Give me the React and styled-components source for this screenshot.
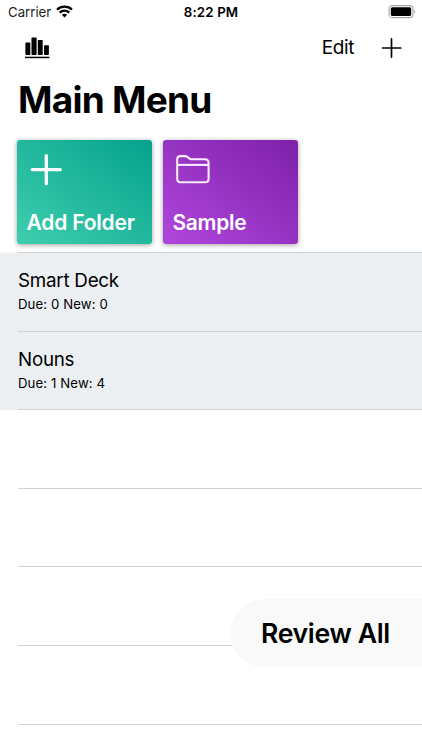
import React from 'react'
import styled, {createGlobalStyle} from 'styled-components';

const decks = [
  {name: 'Smart Deck', due: 0, fresh: 0},
  {name: 'Nouns', due: 1, fresh: 4},
];

const emptyRows = [1, 2, 3, 4];

const WifiIcon = () => (
  <svg width="17" height="13" viewBox="0 0 17 13" fill="none" stroke="#000" strokeWidth="2.2">
    <path d="M1 4.7C5.1 .7 11.9 .7 16 4.7"/>
    <path d="M3.7 7.6C6.4 5 10.6 5 13.3 7.6"/>
    <path d="M8.5 12.4L5.9 9.8C7.4 8.5 9.6 8.5 11.1 9.8Z" fill="#000" stroke="none"/>
  </svg>
)

const BatteryIcon = () => (
  <svg width="28" height="14" viewBox="0 0 28 14">
    <rect x="1" y=".6" width="24" height="12" rx="3.4" fill="none" stroke="#a4a4a4" strokeWidth="1.1"/>
    <rect x="2.8" y="2.3" width="20.4" height="8.6" rx="1.5" fill="#000"/>
    <path d="M26.3 4.6C27.6 5.1 27.6 8 26.3 8.5Z" fill="#a4a4a4"/>
  </svg>
)

const StatsIcon = () => (
  <svg width="25" height="22" viewBox="0 0 25 22" fill="#000">
    <rect x=".4" y="5.6" width="4.9" height="12.4" rx=".8"/>
    <rect x="6.5" y=".5" width="5.1" height="17.5" rx=".8"/>
    <rect x="12.8" y="3" width="4.9" height="15" rx=".8"/>
    <rect x="19" y="8.2" width="4.9" height="9.8" rx=".8"/>
    <rect x="0" y="19.7" width="24.4" height="1.5"/>
  </svg>
)

const AddIcon = () => (
  <svg width="20" height="20" viewBox="0 0 20 20" stroke="#000" strokeWidth="1.7" strokeLinecap="round">
    <path d="M9.5 .9V19.1M.5 10H18.8"/>
  </svg>
)

const CardPlusIcon = () => (
  <svg width="32" height="32" viewBox="0 0 32 32" stroke="#fff" strokeWidth="3.3" strokeLinecap="round">
    <path d="M16.3 1.7V29.7M2.3 15.6H30.3"/>
  </svg>
)

const FolderIcon = () => (
  <svg width="34" height="29" viewBox="0 0 34 29" fill="none" stroke="#fbecff" strokeWidth="2.1" strokeLinejoin="round">
    <path d="M1.2 5V4.3Q1.2 1.1 4.4 1.1H9Q10.5 1.1 11.6 2.1L13.2 3.4Q14.2 4.2 15.6 4.2H28.8Q32.6 4.2 32.6 8.1V23.7Q32.6 27.3 28.8 27.3H5.2Q1.2 27.3 1.2 23.7Z"/>
    <path d="M1.2 9.9H32.6"/>
  </svg>
)

const App = () => (
  <Screen>
    <GlobalStyle/>
    <StatusBar>
      <Carrier>
        <span>Carrier</span>
        <WifiIcon/>
      </Carrier>
      <Time>8:22 PM</Time>
      <Battery><BatteryIcon/></Battery>
    </StatusBar>
    <NavBar>
      <StatsIcon/>
      <Actions>
        <Edit>Edit</Edit>
        <AddIcon/>
      </Actions>
    </NavBar>
    <Title>Main Menu</Title>
    <Folders>
      <Folder $from="#3fceae" $to="#05a28d">
        <FolderGlyph><CardPlusIcon/></FolderGlyph>
        <FolderName $spacing="-0.2px">Add Folder</FolderName>
      </Folder>
      <Folder $from="#b047dc" $to="#7e20a9">
        <FolderGlyph><FolderIcon/></FolderGlyph>
        <FolderName $spacing="-0.3px">Sample</FolderName>
      </Folder>
    </Folders>
    <List>
      {decks.map(({name, due, fresh}) => (
        <Row key={name} $filled>
          <RowContent>
            <DeckName>{name}</DeckName>
            <DeckInfo>Due: {due} New: {fresh}</DeckInfo>
          </RowContent>
        </Row>
      ))}
      {emptyRows.map((id) => <Row key={id}><RowContent/></Row>)}
    </List>
    <ReviewButton>Review All</ReviewButton>
  </Screen>
)

const GlobalStyle = createGlobalStyle`
  * {
    box-sizing: border-box;
  }

  body {
    margin: 0;
    background: #fff;
  }

  svg {
    display: block;
    flex-shrink: 0;
  }
`

const Screen = styled.div`
  position: relative;
  display: flex;
  flex-direction: column;
  width: 422px;
  height: 750px;
  overflow: hidden;
  color: #000;
  font-family: Inter, "Liberation Sans", sans-serif;
`

const StatusBar = styled.div`
  display: grid;
  grid-template-columns: 1fr auto 1fr;
  align-items: center;
  height: 23px;
  padding: 0 6px 0 8px;
  font-size: 13.2px;
`

const Carrier = styled.div`
  display: flex;
  align-items: center;
  gap: 5px;
  color: #222;
`

const Time = styled.div`
  padding-right: 2px;
  font-size: 13.3px;
  font-weight: 600;
  letter-spacing: 0.15px;
`

const Battery = styled.div`
  display: flex;
  justify-content: flex-end;
`

const NavBar = styled.div`
  display: flex;
  align-items: center;
  justify-content: space-between;
  height: 49px;
  padding: 0 20px 0 25px;
`

const Actions = styled.div`
  display: flex;
  align-items: center;
  gap: 28px;
`

const Edit = styled.span`
  font-size: 19px;
  line-height: 24px;
  letter-spacing: -0.4px;
`

const Title = styled.h1`
  height: 68px;
  margin: 0;
  padding-left: 18px;
  font-size: 37px;
  font-weight: 700;
  line-height: 55px;
  letter-spacing: -0.75px;
`

const Folders = styled.div`
  display: flex;
  gap: 11px;
  height: 112px;
  padding-left: 17px;
`

const Folder = styled.div`
  display: flex;
  flex-direction: column;
  justify-content: space-between;
  width: 135px;
  height: 103.5px;
  padding: 13px 9px 8px;
  border-radius: 3px;
  background: linear-gradient(to top right, ${({$from}) => $from}, ${({$to}) => $to});
  box-shadow: 0 1px 5px rgba(0, 0, 0, 0.38);
`

const FolderGlyph = styled.div`
  display: flex;
  align-items: center;
  height: 33px;
  padding-left: 4px;
`

const FolderName = styled.div`
  padding-left: 0.5px;
  color: #fff;
  font-size: 21px;
  font-weight: 600;
  line-height: 27px;
  letter-spacing: ${({$spacing}) => $spacing};
  white-space: nowrap;
`

const List = styled.div`
  &::before {
    content: '';
    display: block;
    height: 1px;
    background: linear-gradient(to right, #f4f5f7 18px, #cfd2d5 18px);
  }
`

const Row = styled.div`
  height: 78.6px;
  padding-left: 18px;
  background: ${({$filled}) => $filled ? '#ebeff2' : '#fff'};
`

const RowContent = styled.div`
  height: 100%;
  padding-top: 16px;
  border-bottom: 1px solid #d2d3d5;
`

const DeckName = styled.div`
  font-size: 18.8px;
  line-height: 24px;
  letter-spacing: -0.25px;
`

const DeckInfo = styled.div`
  font-size: 13.2px;
  line-height: 22px;
  letter-spacing: 0.1px;
`

const ReviewButton = styled.div`
  position: absolute;
  right: 0;
  top: 599px;
  display: flex;
  align-items: center;
  width: 192px;
  height: 68px;
  padding-left: 31px;
  border-radius: 34px 0 0 34px;
  background: #f9f9f9;
  font-size: 26.6px;
  font-weight: 600;
  letter-spacing: -0.35px;
  white-space: nowrap;
`

export default App;
